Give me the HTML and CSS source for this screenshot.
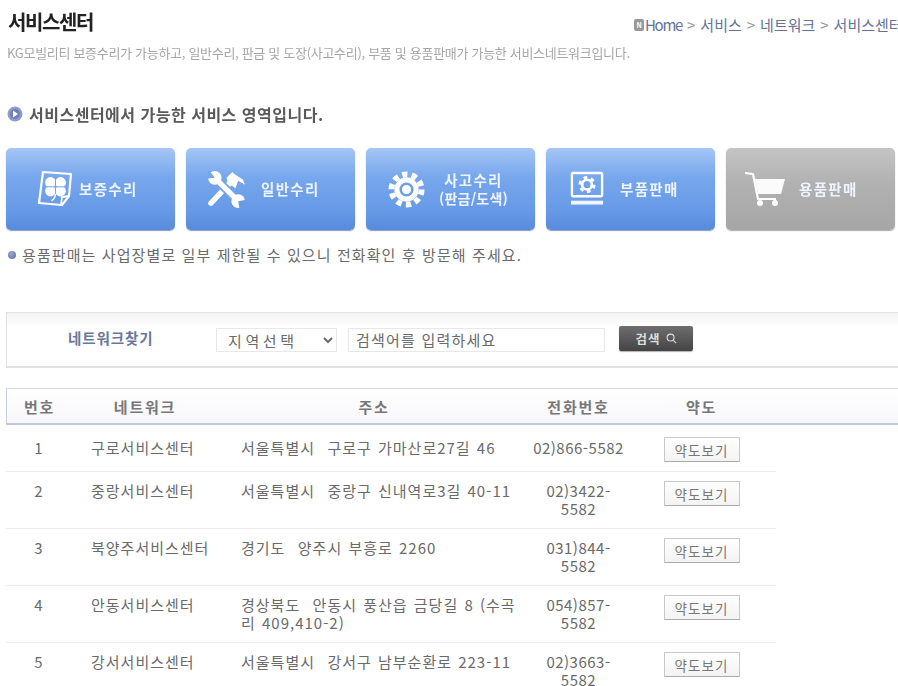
FILE: index.html
```html
<!DOCTYPE html>
<html lang="ko">
<head>
<meta charset="utf-8">
<title>서비스센터</title>
<link rel="stylesheet" href="styles.css">
</head>
<body>
<div class="page">
  <header class="top">
    <h1 class="title">서비스센터</h1>
    <nav class="crumb">
      <span class="crumb-n">N</span><span class="home">Home</span><i>&gt;</i><span>서비스</span><i>&gt;</i><span>네트워크</span><i>&gt;</i><span>서비스센터</span>
    </nav>
  </header>
  <p class="desc">KG모빌리티 보증수리가 가능하고, 일반수리, 판금 및 도장(사고수리), 부품 및 용품판매가 가능한 서비스네트워크입니다.</p>

  <h2 class="section">
    <svg class="section-ic" viewBox="0 0 16 16" width="16" height="16"><circle cx="8" cy="8" r="7.5" fill="#8e9cc8"/><circle cx="8" cy="8" r="5" fill="#6d80b8"/><path d="M6 4.6 11 8 6 11.4Z" fill="#fff"/></svg>
    서비스센터에서 가능한 서비스 영역입니다.
  </h2>

  <div class="cards">
    <a class="card c1">
      <svg class="ic" viewBox="0 0 36 38" width="36" height="38" fill="none" stroke="#fff"><path d="M6 2 34 4 32 26 25 35 2 33Z" stroke-width="2.2" stroke-linejoin="round"/><path d="M24 35 25 27 32 26" stroke-width="1.8"/><g fill="#fff" stroke="none"><circle cx="13.5" cy="12.5" r="5.4"/><circle cx="23.5" cy="12.5" r="5.4"/><circle cx="13.5" cy="21" r="5.4"/><circle cx="23.5" cy="21" r="5.4"/></g><path d="M18.5 8v17M9 16.8h19" stroke="#7aa6e8" stroke-width="1"/><path d="M18.5 24c0 3-1.500 5-4 7" stroke-width="1.4"/></svg>
      <span class="label">보증수리</span>
    </a>
    <a class="card c2">
      <svg class="ic" viewBox="0 0 38 38" width="37" height="37"><g fill="#fff"><path d="M3 33 24 11" stroke="#fff" stroke-width="5.500" stroke-linecap="round"/><path d="M19 7 25 1 27 3 36 9 38 14 31 10 28 18 20 11Z"/></g><path d="M8 8 31 31" stroke="#76a6ea" stroke-width="9"/><path d="M8 8 31 31" stroke="#fff" stroke-width="5.400"/><circle cx="7" cy="7" r="7" fill="#fff"/><circle cx="31" cy="31" r="7" fill="#fff"/><path d="M7 7 1 -1 -2 4Z M7 7 1 -1 -3 8Z" fill="#76a6ea"/><path d="M31 31 40 31 39 39 31 39Z" fill="#6a9ce6" transform="rotate(-10 31 31)"/></svg>
      <span class="label">일반수리</span>
    </a>
    <a class="card c3">
      <svg class="ic" viewBox="0 0 38 38" width="37" height="37" fill="none" stroke="#fff"><circle cx="19" cy="19" r="15.500" stroke-width="6" stroke-dasharray="5.400 4.340"/><circle cx="19" cy="19" r="12.500" fill="#fff" stroke="none"/><circle cx="19" cy="19" r="6" stroke="#6f9fe6" stroke-width="2.600"/></svg>
      <span class="label two"><span>사고수리</span><small>(판금/도색)</small></span>
    </a>
    <a class="card c4">
      <svg class="ic" viewBox="0 0 36 36" width="35" height="36" fill="none" stroke="#fff"><rect x="2" y="1.500" width="31" height="24" rx="1" stroke-width="2.400"/><rect x="1" y="30" width="33" height="4" fill="#fff" stroke="none" opacity=".9"/><circle cx="17.500" cy="13.500" r="7.400" stroke-width="2.800" stroke-dasharray="3.900 3.850"/><circle cx="17.500" cy="13.500" r="5" stroke-width="2.800"/></svg>
      <span class="label">부품판매</span>
    </a>
    <a class="card c5">
      <svg class="ic" viewBox="0 0 40 36" width="40" height="36" fill="none" stroke="#fff"><path d="M0 2 8 3 13 28H31" stroke-width="2.200" stroke-linejoin="round"/><path d="M10 8H40L36 23H13Z" fill="#fff" stroke="none" opacity=".95"/><circle cx="15" cy="32" r="3" fill="#fff" stroke="none"/><circle cx="30" cy="32" r="3" fill="#fff" stroke="none"/></svg>
      <span class="label">용품판매</span>
    </a>
  </div>

  <p class="note"><span class="dot"></span>용품판매는 사업장별로 일부 제한될 수 있으니 전화확인 후 방문해 주세요.</p>

  <form class="search">
    <strong class="search-label">네트워크찾기</strong>
    <select class="region"><option>지역선택</option></select>
    <input class="keyword" type="text" placeholder="검색어를 입력하세요">
    <button class="go" type="button">검색<svg viewBox="0 0 12 12" width="11" height="11" fill="none" stroke="#ddd" stroke-width="1.200"><circle cx="5" cy="5" r="3.800"/><path d="M8 8 11 11"/></svg></button>
  </form>

  <table class="list">
    <colgroup><col class="w1"><col class="w2"><col class="w3"><col class="w4"><col class="w5"><col class="w6"></colgroup>
    <thead><tr><th>번호</th><th>네트워크</th><th>주소</th><th>전화번호</th><th>약도</th><th></th></tr></thead>
    <tbody>
      <tr class="first"><td class="num">1</td><td class="name">구로서비스센터</td><td class="addr">서울특별시 &nbsp;구로구 가마산로27길 46</td><td class="tel">02)866-5582</td><td class="map"><button type="button">약도보기</button></td><td class="rest"></td></tr>
      <tr><td class="num">2</td><td class="name">중랑서비스센터</td><td class="addr">서울특별시 &nbsp;중랑구 신내역로3길 40-11</td><td class="tel">02)3422-5582</td><td class="map"><button type="button">약도보기</button></td><td class="rest"></td></tr>
      <tr><td class="num">3</td><td class="name">북양주서비스센터</td><td class="addr">경기도 &nbsp;양주시 부흥로 2260</td><td class="tel">031)844-5582</td><td class="map"><button type="button">약도보기</button></td><td class="rest"></td></tr>
      <tr><td class="num">4</td><td class="name">안동서비스센터</td><td class="addr">경상북도 &nbsp;안동시 풍산읍 금당길 8 (수곡리 409,410-2)</td><td class="tel">054)857-5582</td><td class="map"><button type="button">약도보기</button></td><td class="rest"></td></tr>
      <tr><td class="num">5</td><td class="name">강서서비스센터</td><td class="addr">서울특별시 &nbsp;강서구 남부순환로 223-11</td><td class="tel">02)3663-5582</td><td class="map"><button type="button">약도보기</button></td><td class="rest"></td></tr>
    </tbody>
  </table>
</div>
</body>
</html>
```

FILE: styles.css
```css
html, body {
  margin: 0;
  height: 100%;
  overflow: hidden;
  background: #fff;
}
body, input, select, button {
  font-family: "Noto Sans CJK KR", "Noto Sans", sans-serif;
}
.page {
  width: 898px;
  height: 686px;
  overflow: hidden;
  display: flex;
  flex-direction: column;
}
.top {
  display: flex;
  align-items: flex-start;
  flex: none;
  height: 43px;
}
.title {
  flex: 0 0 634px;
  margin: 0;
  padding: 8px 0 0 8px;
  box-sizing: border-box;
  font-size: 20px;
  line-height: 28px;
  font-weight: 700;
  letter-spacing: -1.4px;
  color: #222;
  filter: blur(.3px);
}
.crumb {
  flex: none;
  display: flex;
  align-items: center;
  gap: 5px;
  padding-top: 15px;
  font-size: 15px;
  line-height: 20px;
  color: #64739a;
  white-space: nowrap;
}
.crumb i { font-style: normal; color: #999; }
.home { letter-spacing: -1.3px; }
.crumb-n {
  width: 10px;
  height: 12px;
  margin-right: -4px;
  border-radius: 2px;
  background: #999;
  color: #fff;
  font-size: 7px;
  line-height: 12px;
  font-weight: 700;
  text-align: center;
}
.desc {
  margin: 0;
  padding-left: 7px;
  font-size: 13px;
  line-height: 20px;
  letter-spacing: -0.3px;
  color: #a6a6a6;
  white-space: nowrap;
  filter: blur(.3px);
}
.section {
  display: flex;
  align-items: center;
  gap: 6px;
  margin: 40px 0 0 7px;
  font-size: 16px;
  line-height: 22px;
  font-weight: 700;
  letter-spacing: .5px;
  color: #5a5a5a;
  filter: blur(.3px);
}
.cards {
  display: grid;
  grid-template-columns: repeat(5, 169px);
  gap: 11px;
  margin: 23px 0 0 6px;
}
.card {
  height: 82px;
  display: flex;
  align-items: center;
  border-radius: 5px;
  background: linear-gradient(#a6c6f6, #77a7ec 35%, #6598e6 80%, #578ada);
  box-shadow: 0 1px 1px rgba(60, 90, 140, .6);
  color: #fff;
}
.ic { flex: none; filter: blur(.4px); }
.label {
  font-size: 14.5px;
  line-height: 18px;
  font-weight: 700;
  letter-spacing: 1.3px;
  color: #eef4fd;
  white-space: nowrap;
  filter: blur(.3px);
}
.two {
  display: flex;
  flex-direction: column;
  align-items: center;
}
.two small { font-size: 14px; letter-spacing: .2px; }
.c1 { padding-left: 31px; gap: 6px; }
.c2 { padding-left: 22px; gap: 16px; }
.c3 { padding-left: 22px; gap: 14px; }
.c4 { padding-left: 24px; gap: 15px; }
.c5 {
  padding-left: 19px;
  gap: 14px;
  background: linear-gradient(#c4c4c4, #b2b2b2 40%, #a6a6a6);
  box-shadow: 0 1px 1px rgba(90, 90, 90, .5);
}
.note {
  margin: 15px 0 0 8px;
  display: flex;
  align-items: center;
  gap: 6px;
  font-size: 15px;
  line-height: 20px;
  letter-spacing: 1.1px;
  color: #6a6a6a;
}
.dot {
  width: 8px;
  height: 8px;
  border-radius: 50%;
  background: radial-gradient(circle at 40% 35%, #a0a8d0, #5c6aa0);
}
.search {
  flex: none;
  display: flex;
  align-items: center;
  height: 56px;
  margin: 47px 0 0 6px;
  box-sizing: border-box;
  border: 1px solid #e2e2e2;
  border-right: 0;
  border-bottom-width: 2px;
  background: linear-gradient(#f3f3f3, #fff 16px);
}
.search-label {
  width: 209px;
  padding-left: 61px;
  box-sizing: border-box;
  margin-top: -5px;
  font-size: 14.5px;
  letter-spacing: .9px;
  color: #68779c;
}
.region {
  width: 121px;
  height: 24px;
  padding: 0 7px;
  box-sizing: border-box;
  border: 1px solid #e8e8e8;
  background: #fff;
  font-size: 15px;
  letter-spacing: 3.6px;
  color: #6a6a6a;
}
.keyword {
  width: 257px;
  height: 24px;
  margin-left: 11px;
  padding: 0 7px;
  box-sizing: border-box;
  border: 1px solid #e8e8e8;
  font-size: 15px;
  letter-spacing: 1.2px;
}
.keyword::placeholder { color: #6a6a6a; }
.go {
  display: flex;
  align-items: center;
  justify-content: center;
  gap: 5px;
  width: 74px;
  height: 25px;
  margin: -2px 0 0 14px;
  padding: 0;
  border: 0;
  border-radius: 2px;
  background: linear-gradient(#6e6e6e, #444);
  box-shadow: 0 1px 1px rgba(0, 0, 0, .3);
  color: #ddd;
  font-size: 12.5px;
  letter-spacing: 1px;
  font-weight: 700;
}
.list {
  flex: none;
  width: 892px;
  margin: 20px 0 0 6px;
  border-collapse: separate;
  border-spacing: 0;
  table-layout: fixed;
  font-size: 15px;
  line-height: 18px;
  color: #6a6a6a;
  letter-spacing: 1px;
}
.w1 { width: 66px; }
.w2 { width: 146px; }
.w3 { width: 312px; }
.w4 { width: 97px; }
.w5 { width: 149px; }
.w6 { width: 122px; }
.list th {
  height: 32px;
  padding: 2px 0 0;
  box-sizing: content-box;
  border-top: 1px solid #dcdcdc;
  border-bottom: 2px solid #c3c6e0;
  background: linear-gradient(#fff, #f7f7fb);
  font-size: 15px;
  font-weight: 700;
  letter-spacing: 1.8px;
  color: #777;
  text-align: center;
}
.list th:first-child { border-left: 1px solid #c9cede; }
.list td {
  padding: 10px 0;
  vertical-align: top;
  border-bottom: 1px solid #ececec;
}
.list td.rest { border-bottom: 0; }
.list .first td { padding: 14px 0; }
.num, .tel, .map { text-align: center; }
.list td.name { padding-left: 19px; }
.list td.addr { padding-left: 23px; padding-right: 10px; word-spacing: 1px; }
.list td.tel { letter-spacing: .5px; }
.map button {
  display: block;
  width: 76px;
  height: 25px;
  margin: -1px auto -6px;
  padding: 0;
  box-sizing: border-box;
  border: 1px solid #c8c8c8;
  border-bottom-color: #aaa;
  border-radius: 1px;
  background: linear-gradient(#fff, #f3f3f3);
  font-size: 13.5px;
  letter-spacing: 1.1px;
  color: #777;
}
.first .map button { margin-top: -2px; margin-bottom: -5px; }
```
